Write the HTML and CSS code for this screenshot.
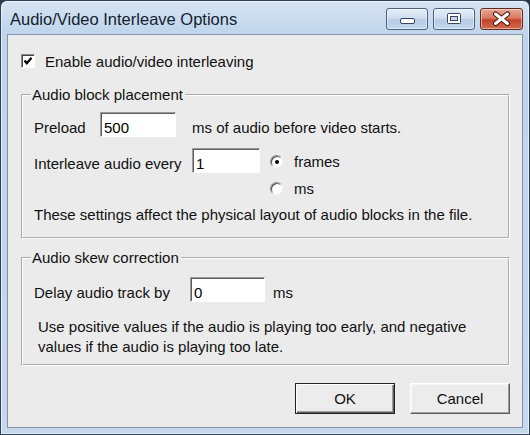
FILE: index.html
```html
<!DOCTYPE html>
<html lang="en">
<head>
  <meta charset="UTF-8" />
  <title>Audio/Video Interleave Options</title>
  <link rel="stylesheet" href="styles.css">
</head>
<body>
  <div class="window">
    <div class="titlebar">
      <span class="title">Audio/Video Interleave Options</span>
      <div class="caption-buttons">
        <span class="cap cap-min">
          <svg width="42" height="22" viewBox="0 0 42 22"><rect x="14.5" y="10.5" width="14" height="5" rx="1.5" fill="#fff" stroke="#34475e"/></svg>
        </span>
        <span class="cap cap-max">
          <svg width="42" height="22" viewBox="0 0 42 22"><rect x="14.5" y="5.5" width="13" height="10" rx="1" fill="#fff" stroke="#34475e"/><rect x="17.5" y="8.5" width="7" height="4" fill="#c9d7e8" stroke="#34475e"/></svg>
        </span>
        <span class="cap cap-close">
          <svg width="43" height="22" viewBox="0 0 43 22"><path d="M15.5 6 L27.5 15.5 M27.5 6 L15.5 15.5" stroke="#4a1a12" stroke-width="5" stroke-linecap="round"/><path d="M15.5 6 L27.5 15.5 M27.5 6 L15.5 15.5" stroke="#fff" stroke-width="3" stroke-linecap="round"/></svg>
        </span>
      </div>
    </div>

    <div class="client">
      <label class="check-row">
        <span class="checkbox">
          <svg width="14" height="14" viewBox="0 0 14 14"><polyline points="3.5,6.5 5.8,9.3 10.5,3.8" fill="none" stroke="#000" stroke-width="2.2"/></svg>
        </span>
        Enable audio/video interleaving
      </label>

      <fieldset class="group">
        <legend>Audio block placement</legend>
        <div class="row">
          <span class="field-label label-preload">Preload</span>
          <input class="edit edit-preload" type="text" value="500">
          <span class="unit unit-wide">ms of audio before video starts.</span>
        </div>
        <div class="row row-interleave">
          <span class="field-label label-interleave">Interleave audio every</span>
          <input class="edit edit-interleave" type="text" value="1">
          <div class="radios">
            <div class="radio-row"><span class="radio checked"></span>frames</div>
            <div class="radio-row"><span class="radio"></span>ms</div>
          </div>
        </div>
        <p class="note">These settings affect the physical layout of audio blocks in the file.</p>
      </fieldset>

      <fieldset class="group group-skew">
        <legend>Audio skew correction</legend>
        <div class="row">
          <span class="field-label label-delay">Delay audio track by</span>
          <input class="edit edit-delay" type="text" value="0">
          <span class="unit">ms</span>
        </div>
        <p class="note note-skew">Use positive values if the audio is playing too early, and negative<br>values if the audio is playing too late.</p>
      </fieldset>

      <div class="actions">
        <button class="btn btn-default">OK</button>
        <button class="btn">Cancel</button>
      </div>
    </div>
  </div>
</body>
</html>
```

FILE: styles.css
```css
html, body {
  margin: 0;
  height: 100%;
  overflow: hidden;
}
body {
  background: #2b3846;
  font-family: "Liberation Sans", Arial, sans-serif;
  font-size: 15px;
  color: #111;
}
.window {
  box-sizing: border-box;
  width: 530px;
  height: 435px;
  display: flex;
  flex-direction: column;
  padding: 0 6px 6px 6px;
  border: 1px solid #2f4257;
  border-radius: 7px 7px 0 0;
  background: linear-gradient(to bottom, #d6e4f3 0, #bfd4ea 34px, #c5d8ec 100%);
  box-shadow: inset 0 0 0 1px rgba(255, 255, 255, 0.55);
}
.titlebar {
  height: 33px;
  display: flex;
  align-items: flex-start;
  justify-content: space-between;
  padding: 7px 0 0 3px;
  box-sizing: border-box;
}
.title {
  font-size: 16.5px;
  line-height: 22px;
  color: #14222f;
}
.caption-buttons {
  display: flex;
  gap: 5px;
}
.cap {
  display: block;
  height: 22px;
  box-sizing: border-box;
  border: 1px solid #4c627b;
  border-radius: 3px;
  box-shadow: inset 0 0 0 1px rgba(255, 255, 255, 0.45);
  overflow: hidden;
}
.cap svg {
  display: block;
  margin: -1px;
}
.cap-min, .cap-max {
  width: 42px;
  background: linear-gradient(to bottom, #e4edf7 0, #cfdeef 45%, #b6cce5 55%, #c3d7ec 100%);
}
.cap-close {
  width: 43px;
  border-color: #5e2a20;
  background: linear-gradient(to bottom, #e8a795 0, #d9785f 45%, #c3432b 55%, #d26a4c 100%);
}
.client {
  flex: 1;
  background: #ebebeb;
  border: 1px solid #7f93aa;
  padding: 17px 12px 0 13px;
}
.check-row {
  display: flex;
  align-items: center;
  height: 18px;
}
.checkbox {
  width: 14px;
  height: 14px;
  box-sizing: border-box;
  margin-right: 10px;
  background: #fff;
  border: 1px solid;
  border-color: #8a8a8a #fff #fff #8a8a8a;
  box-shadow: inset 1px 1px 0 #444;
}
.checkbox svg {
  display: block;
  margin: -1px;
}
.group {
  margin: 16px 0 0;
  padding: 8px 0 14px 11px;
  border: 2px groove #fff;
  min-width: 0;
}
.group legend {
  margin-left: -3px;
  padding: 0 2px 0 1px;
  line-height: 18px;
}
.group-skew {
  margin-top: 10px;
  padding-top: 10px;
  padding-bottom: 7px;
}
.row {
  display: flex;
  align-items: baseline;
}
.row-interleave {
  margin-top: 11px;
}
.field-label {
  line-height: 17px;
}
.label-preload { width: 66px; }
.label-interleave { width: 158px; }
.label-delay { width: 156px; }
.edit {
  box-sizing: border-box;
  height: 25px;
  padding: 5px 3px 0;
  margin: 0;
  font: inherit;
  line-height: 17px;
  color: #000;
  background: #fff;
  border: 1px solid;
  border-color: #9a9a9a #fff #fff #9a9a9a;
  box-shadow: inset 1px 1px 0 #5e5e5e;
  outline: none;
}
.edit-preload { width: 76px; }
.edit-interleave { width: 68px; }
.edit-delay { width: 75px; }
.unit {
  margin-left: 8px;
}
.unit-wide {
  margin-left: 16px;
}
.radios {
  align-self: flex-start;
  margin: 4px 0 0 10px;
}
.radio-row {
  display: flex;
  align-items: center;
  height: 18px;
}
.radio-row + .radio-row {
  margin-top: 9px;
}
.radio {
  position: relative;
  width: 13px;
  height: 13px;
  box-sizing: border-box;
  margin-right: 11px;
  border-radius: 50%;
  background: #fff;
  border: 1px solid;
  border-color: #8a8a8a #f4f4f4 #f4f4f4 #8a8a8a;
  box-shadow: inset 1px 1px 0 #505050;
}
.radio.checked::after {
  content: "";
  position: absolute;
  left: 4px;
  top: 4px;
  width: 4px;
  height: 4px;
  border-radius: 50%;
  background: #000;
}
.note {
  margin: 9px 0 0;
  line-height: 17px;
}
.note-skew {
  margin: 15px 0 0 4px;
  line-height: 20px;
}
.actions {
  display: flex;
  justify-content: flex-end;
  gap: 15px;
  margin-top: 17px;
}
.btn {
  width: 100px;
  height: 31px;
  font: inherit;
  color: #111;
  background: #ececec;
  border: 1px solid;
  border-color: #fff #5a5a5a #5a5a5a #fff;
  box-shadow: inset -1px -1px 0 #a0a0a0, inset 1px 1px 0 #f6f6f6;
  padding: 0;
}
.btn-default {
  border-color: #222;
  box-shadow: inset 1px 1px 0 #fff, inset -1px -1px 0 #5a5a5a, inset -2px -2px 0 #a0a0a0;
}
```
